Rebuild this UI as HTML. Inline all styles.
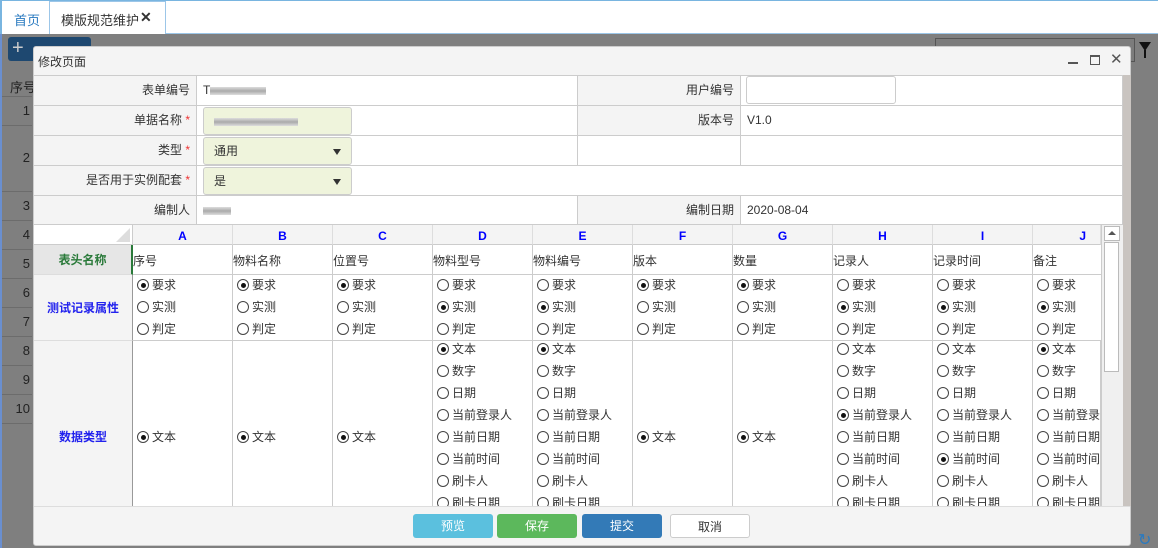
<!DOCTYPE html>
<html><head><meta charset="utf-8"><style>
*{margin:0;padding:0;box-sizing:border-box}
body{width:1158px;height:548px;overflow:hidden;position:relative;font-family:"Liberation Sans","Noto Sans CJK SC",sans-serif;font-size:12px;color:#333;background:#fff}
.a{position:absolute}
.bg{left:0;top:34px;width:1158px;height:514px;background:#7f7f7f;border-left:2px solid #6a8fd0}
.rn{position:absolute;left:2px;width:32px;text-align:right;color:#222;font-size:13px;padding-right:4px;white-space:nowrap;overflow:hidden}
.hl{position:absolute;left:2px;width:30px;height:1px;background:#6c6c6c}
.dlg{left:33px;top:46px;width:1098px;height:500px;background:#f4f4f4;border-radius:3px;border:1px solid #ccc}
.ft{position:absolute;background:#f4f4f4;border-right:1px solid #ccc;border-bottom:1px solid #ccc;text-align:right;padding-right:6px;line-height:29px;color:#333}
.fv{position:absolute;background:#fff;border-bottom:1px solid #ccc;border-right:1px solid #ccc;line-height:29px;padding-left:6px;color:#333}
.req{color:#e33}
.inp{position:absolute;background:#eff4dc;border:1px solid #ccc;border-radius:3px;height:28px;line-height:26px;padding-left:10px}
.tri{position:absolute;right:10px;top:11px;width:0;height:0;border-left:4px solid transparent;border-right:4px solid transparent;border-top:6px solid #333}
.blur{display:inline-block;height:8px;background:linear-gradient(#ddd,#aaa,#ddd);vertical-align:middle}
.sh{left:34px;top:225px;width:1067px;height:281px;overflow:hidden;background:#fff}
.ch{position:absolute;top:0;height:20px;width:100px;background:#f4f4f4;border-right:1px solid #ddd;border-bottom:1px solid #ccc;text-align:center;color:#00f;font-weight:bold;line-height:22px;font-size:12px}
.cell{position:absolute;width:100px;border-right:1px solid #ccc;border-bottom:1px solid #ccc;background:#fff}
.rh{position:absolute;left:0;width:99px;border-right:1px solid #999;border-bottom:1px solid #ddd;text-align:center;font-weight:bold;color:#22e;background:#f4f4f4;font-size:12px}
.r{position:absolute;left:4px;height:16px;line-height:16px;white-space:nowrap;color:#333}
.c{display:inline-block;width:12px;height:12px;border:1px solid #444;border-radius:50%;vertical-align:-2px;margin-right:3px;position:relative;background:#fff}
.on::after{content:"";position:absolute;left:2.5px;top:2.5px;width:5px;height:5px;border-radius:50%;background:#111}
.btn{position:absolute;top:514px;width:80px;height:24px;border-radius:3px;color:#fff;text-align:center;line-height:24px;font-size:12px}
</style></head><body>
<!-- tabs -->
<div class="a" style="left:0;top:0;width:1158px;height:34px;background:#fff;border-top:1px solid #79b5e0;border-left:2px solid #79b5e0"></div>
<div class="a" style="left:14px;top:10px;color:#2a7ac0;font-size:13px">首页</div>
<div class="a" style="left:49px;top:1px;width:117px;height:34px;border:1px solid #9cc6e8;border-bottom:none;background:#fff"></div>
<div class="a" style="left:61px;top:10px;font-size:13px;color:#333">模版规范维护</div>
<div class="a" style="left:140px;top:9px;font-size:14px;color:#333;font-weight:bold">✕</div>
<div class="a" style="left:166px;top:33px;width:992px;height:1px;background:#9cc6e8"></div>
<!-- background -->
<div class="a bg"></div>
<div class="a" style="left:8px;top:37px;width:83px;height:24px;background:#1e4870;border-radius:3px;color:#ccc;font-size:20px;line-height:22px;padding-left:4px">+</div>
<div class="a" style="left:935px;top:38px;width:200px;height:24px;border:1px solid #555;background:#7c7c7c"></div>
<div class="a" style="left:1139px;top:42px;width:0;height:0;border-left:6px solid transparent;border-right:6px solid transparent;border-top:9px solid #111"></div>
<div class="a" style="left:1144px;top:50px;width:2px;height:8px;background:#111"></div>
<div class="rn" style="top:77px;left:10px;width:30px;text-align:left">序号</div>
<div class="hl" style="top:96px"></div><div class="rn" style="top:103px">1</div>
<div class="hl" style="top:125px"></div><div class="rn" style="top:150px">2</div>
<div class="hl" style="top:191px"></div><div class="rn" style="top:198px">3</div>
<div class="hl" style="top:220px"></div><div class="rn" style="top:227px">4</div>
<div class="hl" style="top:249px"></div><div class="rn" style="top:256px">5</div>
<div class="hl" style="top:278px"></div><div class="rn" style="top:285px">6</div>
<div class="hl" style="top:307px"></div><div class="rn" style="top:314px">7</div>
<div class="hl" style="top:336px"></div><div class="rn" style="top:343px">8</div>
<div class="hl" style="top:365px"></div><div class="rn" style="top:372px">9</div>
<div class="hl" style="top:394px"></div><div class="rn" style="top:401px">10</div>
<div class="hl" style="top:423px"></div>
<div class="a" style="left:1138px;top:530px;color:#2a7ac0;font-size:16px">↻</div>
<!-- dialog -->
<div class="a dlg"></div>
<div class="a" style="left:38px;top:53px;font-size:12px;color:#333">修改页面</div>
<div class="a" style="left:1068px;top:62px;width:10px;height:2px;background:#555"></div>
<div class="a" style="left:1090px;top:55px;width:10px;height:10px;border:1px solid #555;border-top-width:2px"></div>
<div class="a" style="left:1110px;top:50px;font-size:15px;color:#555">✕</div>
<div class="a" style="left:34px;top:75px;width:1089px;height:1px;background:#ccc"></div>
<div class="a" style="left:1123px;top:75px;width:8px;height:431px;background:#c9c4c0"></div>
<!-- form -->
<div class="ft" style="left:34px;top:76px;width:163px;height:30px">表单编号</div>
<div class="fv" style="left:197px;top:76px;width:381px;height:30px">T<span class="blur" style="width:56px"></span></div>
<div class="ft" style="left:578px;top:76px;width:163px;height:30px">用户编号</div>
<div class="fv" style="left:741px;top:76px;width:382px;height:30px"></div>
<div class="a" style="left:746px;top:76px;width:150px;height:28px;border:1px solid #ccc;border-radius:3px;background:#fff"></div>

<div class="ft" style="left:34px;top:106px;width:163px;height:30px">单据名称 <span class="req">*</span></div>
<div class="fv" style="left:197px;top:106px;width:381px;height:30px"></div>
<div class="inp" style="left:203px;top:107px;width:149px"><span class="blur" style="width:84px"></span></div>
<div class="ft" style="left:578px;top:106px;width:163px;height:30px">版本号</div>
<div class="fv" style="left:741px;top:106px;width:382px;height:30px">V1.0</div>

<div class="ft" style="left:34px;top:136px;width:163px;height:30px">类型 <span class="req">*</span></div>
<div class="fv" style="left:197px;top:136px;width:381px;height:30px"></div>
<div class="inp" style="left:203px;top:137px;width:149px">通用<div class="tri"></div></div>
<div class="ft" style="left:578px;top:136px;width:163px;height:30px;background:#fff"></div>
<div class="fv" style="left:741px;top:136px;width:382px;height:30px"></div>

<div class="ft" style="left:34px;top:166px;width:163px;height:30px">是否用于实例配套 <span class="req">*</span></div>
<div class="fv" style="left:197px;top:166px;width:926px;height:30px"></div>
<div class="inp" style="left:203px;top:167px;width:149px">是<div class="tri"></div></div>

<div class="ft" style="left:34px;top:196px;width:163px;height:29px">编制人</div>
<div class="fv" style="left:197px;top:196px;width:381px;height:29px"><span class="blur" style="width:28px"></span></div>
<div class="ft" style="left:578px;top:196px;width:163px;height:29px">编制日期</div>
<div class="fv" style="left:741px;top:196px;width:382px;height:29px">2020-08-04</div>

<!-- sheet -->
<div class="a sh">
<div class="a" style="left:0;top:0;width:99px;height:20px;background:#fff;border-bottom:1px solid #ccc;border-right:1px solid #ccc"></div>
<div class="a" style="left:82px;top:3px;width:0;height:0;border-left:14px solid transparent;border-bottom:14px solid #ddd"></div>
<div class="ch" style="left:99px">A</div><div class="ch" style="left:199px">B</div><div class="ch" style="left:299px">C</div><div class="ch" style="left:399px">D</div><div class="ch" style="left:499px">E</div><div class="ch" style="left:599px">F</div><div class="ch" style="left:699px">G</div><div class="ch" style="left:799px">H</div><div class="ch" style="left:899px">I</div><div class="ch" style="left:999px;width:68px;text-align:right;padding-right:14px">J</div>

<div class="rh" style="top:20px;height:30px;line-height:30px;color:#2a7a3a;background:#e6e6e6;border-right:2px solid #2a7a3a">表头名称</div>
<div class="rh" style="top:50px;height:66px;line-height:66px">测试记录属性</div>
<div class="rh" style="top:116px;height:200px;line-height:192px">数据类型</div>

<div class="cell" style="left:99px;top:20px;height:30px;line-height:32px">序号</div>
<div class="cell" style="left:199px;top:20px;height:30px;line-height:32px">物料名称</div>
<div class="cell" style="left:299px;top:20px;height:30px;line-height:32px">位置号</div>
<div class="cell" style="left:399px;top:20px;height:30px;line-height:32px">物料型号</div>
<div class="cell" style="left:499px;top:20px;height:30px;line-height:32px">物料编号</div>
<div class="cell" style="left:599px;top:20px;height:30px;line-height:32px">版本</div>
<div class="cell" style="left:699px;top:20px;height:30px;line-height:32px">数量</div>
<div class="cell" style="left:799px;top:20px;height:30px;line-height:32px">记录人</div>
<div class="cell" style="left:899px;top:20px;height:30px;line-height:32px">记录时间</div>
<div class="cell" style="left:999px;top:20px;height:30px;line-height:32px">备注</div>

<!-- row 6-7 -->
<div class="cell" style="left:99px;top:50px;height:66px"><div class="r" style="top:2px"><span class="c on"></span>要求</div><div class="r" style="top:24px"><span class="c"></span>实测</div><div class="r" style="top:46px"><span class="c"></span>判定</div></div>
<div class="cell" style="left:199px;top:50px;height:66px"><div class="r" style="top:2px"><span class="c on"></span>要求</div><div class="r" style="top:24px"><span class="c"></span>实测</div><div class="r" style="top:46px"><span class="c"></span>判定</div></div>
<div class="cell" style="left:299px;top:50px;height:66px"><div class="r" style="top:2px"><span class="c on"></span>要求</div><div class="r" style="top:24px"><span class="c"></span>实测</div><div class="r" style="top:46px"><span class="c"></span>判定</div></div>
<div class="cell" style="left:399px;top:50px;height:66px"><div class="r" style="top:2px"><span class="c"></span>要求</div><div class="r" style="top:24px"><span class="c on"></span>实测</div><div class="r" style="top:46px"><span class="c"></span>判定</div></div>
<div class="cell" style="left:499px;top:50px;height:66px"><div class="r" style="top:2px"><span class="c"></span>要求</div><div class="r" style="top:24px"><span class="c on"></span>实测</div><div class="r" style="top:46px"><span class="c"></span>判定</div></div>
<div class="cell" style="left:599px;top:50px;height:66px"><div class="r" style="top:2px"><span class="c on"></span>要求</div><div class="r" style="top:24px"><span class="c"></span>实测</div><div class="r" style="top:46px"><span class="c"></span>判定</div></div>
<div class="cell" style="left:699px;top:50px;height:66px"><div class="r" style="top:2px"><span class="c on"></span>要求</div><div class="r" style="top:24px"><span class="c"></span>实测</div><div class="r" style="top:46px"><span class="c"></span>判定</div></div>
<div class="cell" style="left:799px;top:50px;height:66px"><div class="r" style="top:2px"><span class="c"></span>要求</div><div class="r" style="top:24px"><span class="c on"></span>实测</div><div class="r" style="top:46px"><span class="c"></span>判定</div></div>
<div class="cell" style="left:899px;top:50px;height:66px"><div class="r" style="top:2px"><span class="c"></span>要求</div><div class="r" style="top:24px"><span class="c on"></span>实测</div><div class="r" style="top:46px"><span class="c"></span>判定</div></div>
<div class="cell" style="left:999px;top:50px;height:66px"><div class="r" style="top:2px"><span class="c"></span>要求</div><div class="r" style="top:24px"><span class="c on"></span>实测</div><div class="r" style="top:46px"><span class="c"></span>判定</div></div>

<!-- data type -->
<div class="cell" style="left:99px;top:116px;height:200px"><div class="r" style="top:88px"><span class="c on"></span>文本</div></div>
<div class="cell" style="left:199px;top:116px;height:200px"><div class="r" style="top:88px"><span class="c on"></span>文本</div></div>
<div class="cell" style="left:299px;top:116px;height:200px"><div class="r" style="top:88px"><span class="c on"></span>文本</div></div>
<div class="cell" style="left:599px;top:116px;height:200px"><div class="r" style="top:88px"><span class="c on"></span>文本</div></div>
<div class="cell" style="left:699px;top:116px;height:200px"><div class="r" style="top:88px"><span class="c on"></span>文本</div></div>
<div class="cell" style="left:399px;top:116px;height:200px"><div class="r" style="top:0px"><span class="c on"></span>文本</div><div class="r" style="top:22px"><span class="c"></span>数字</div><div class="r" style="top:44px"><span class="c"></span>日期</div><div class="r" style="top:66px"><span class="c"></span>当前登录人</div><div class="r" style="top:88px"><span class="c"></span>当前日期</div><div class="r" style="top:110px"><span class="c"></span>当前时间</div><div class="r" style="top:132px"><span class="c"></span>刷卡人</div><div class="r" style="top:154px"><span class="c"></span>刷卡日期</div></div>
<div class="cell" style="left:499px;top:116px;height:200px"><div class="r" style="top:0px"><span class="c on"></span>文本</div><div class="r" style="top:22px"><span class="c"></span>数字</div><div class="r" style="top:44px"><span class="c"></span>日期</div><div class="r" style="top:66px"><span class="c"></span>当前登录人</div><div class="r" style="top:88px"><span class="c"></span>当前日期</div><div class="r" style="top:110px"><span class="c"></span>当前时间</div><div class="r" style="top:132px"><span class="c"></span>刷卡人</div><div class="r" style="top:154px"><span class="c"></span>刷卡日期</div></div>
<div class="cell" style="left:799px;top:116px;height:200px"><div class="r" style="top:0px"><span class="c"></span>文本</div><div class="r" style="top:22px"><span class="c"></span>数字</div><div class="r" style="top:44px"><span class="c"></span>日期</div><div class="r" style="top:66px"><span class="c on"></span>当前登录人</div><div class="r" style="top:88px"><span class="c"></span>当前日期</div><div class="r" style="top:110px"><span class="c"></span>当前时间</div><div class="r" style="top:132px"><span class="c"></span>刷卡人</div><div class="r" style="top:154px"><span class="c"></span>刷卡日期</div></div>
<div class="cell" style="left:899px;top:116px;height:200px"><div class="r" style="top:0px"><span class="c"></span>文本</div><div class="r" style="top:22px"><span class="c"></span>数字</div><div class="r" style="top:44px"><span class="c"></span>日期</div><div class="r" style="top:66px"><span class="c"></span>当前登录人</div><div class="r" style="top:88px"><span class="c"></span>当前日期</div><div class="r" style="top:110px"><span class="c on"></span>当前时间</div><div class="r" style="top:132px"><span class="c"></span>刷卡人</div><div class="r" style="top:154px"><span class="c"></span>刷卡日期</div></div>
<div class="cell" style="left:999px;top:116px;height:200px;overflow:hidden;width:68px"><div class="r" style="top:0px"><span class="c on"></span>文本</div><div class="r" style="top:22px"><span class="c"></span>数字</div><div class="r" style="top:44px"><span class="c"></span>日期</div><div class="r" style="top:66px"><span class="c"></span>当前登录人</div><div class="r" style="top:88px"><span class="c"></span>当前日期</div><div class="r" style="top:110px"><span class="c"></span>当前时间</div><div class="r" style="top:132px"><span class="c"></span>刷卡人</div><div class="r" style="top:154px"><span class="c"></span>刷卡日期</div></div>
</div>
<!-- sheet scrollbar -->
<div class="a" style="left:1101px;top:225px;width:22px;height:281px;background:#f0f0f0;border-left:1px solid #ccc"></div>
<div class="a" style="left:1104px;top:226px;width:16px;height:15px;background:#fff;border:1px solid #bbb"></div>
<div class="a" style="left:1108px;top:231px;width:0;height:0;border-left:4px solid transparent;border-right:4px solid transparent;border-bottom:4px solid #555"></div>
<div class="a" style="left:1104px;top:242px;width:15px;height:130px;background:#fff;border:1px solid #bbb"></div>
<!-- footer -->
<div class="a" style="left:34px;top:506px;width:1096px;height:1px;background:#ddd"></div>
<div class="btn" style="left:413px;background:#5bc0de">预览</div>
<div class="btn" style="left:497px;background:#5cb85c">保存</div>
<div class="btn" style="left:582px;background:#337ab7">提交</div>
<div class="btn" style="left:670px;background:#fff;color:#333;border:1px solid #ccc">取消</div>
</body></html>
